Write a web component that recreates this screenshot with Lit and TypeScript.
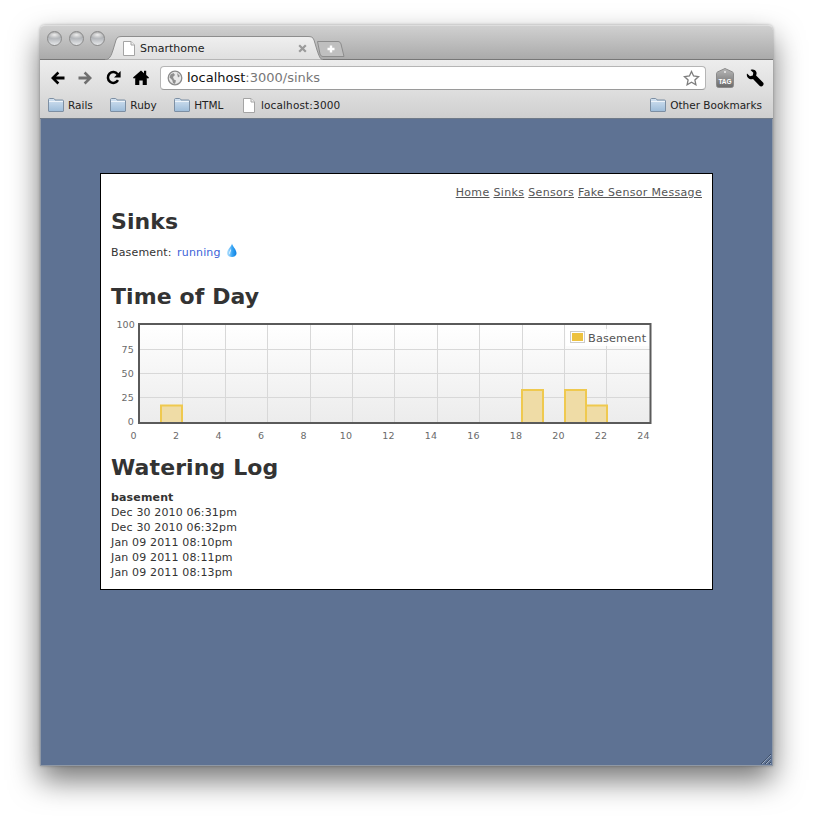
import { LitElement, html, css, svg } from 'lit';
import { customElement } from 'lit/decorators.js';

// chart geometry, taken from the plot area (svg user space = page coords)
const gridX = (h: number) => Math.round(139.9 + h * 21.2) + 0.5;
const labelX = (h: number) => 133.5 + h * 21.25;

const HOURS = [0, 2, 4, 6, 8, 10, 12, 14, 16, 18, 20, 22, 24];
const GRID_Y = [349.5, 373.5, 397.5];
const LEVELS = [
  { v: 0, x: 134, y: 424.5 },
  { v: 25, x: 134, y: 401 },
  { v: 50, x: 134, y: 377 },
  { v: 75, x: 134, y: 352.5 },
  { v: 100, x: 135, y: 328 },
];
const BARS = [
  { x: 161, w: 21, top: 405.5 },
  { x: 522, w: 21, top: 390 },
  { x: 565, w: 21, top: 390 },
  { x: 586, w: 21, top: 405.5 },
];
const LOG = [
  'Dec 30 2010 06:31pm',
  'Dec 30 2010 06:32pm',
  'Jan 09 2011 08:10pm',
  'Jan 09 2011 08:11pm',
  'Jan 09 2011 08:13pm',
];

const folder = html`<svg class="bm-icon" width="16" height="14" viewBox="0 0 16 14">
  <defs>
    <linearGradient id="fld" x1="0" y1="0" x2="0" y2="1">
      <stop offset="0" stop-color="#d3e2f1" />
      <stop offset="1" stop-color="#9dbcd9" />
    </linearGradient>
  </defs>
  <path d="M.5 13V1.6C.5 1 .9.5 1.5.5h4c.5 0 .8.2 1 .6l.5.9h7.5c.6 0 1 .4 1 1V13c0 .3-.2.5-.5.5H1c-.3 0-.5-.2-.5-.5Z" fill="url(#fld)" stroke="#7d8fa3" />
  <path d="M1 3.5h14" stroke="#eef4fa" />
</svg>`;

const page = (cls: string) => html`<svg class=${cls} width="12" height="15" viewBox="0 0 12 15">
  <path d="M.5.5h7.5l3.5 3.5v10.5H.5Z" fill="#fff" stroke="#a4a4a4" />
  <path d="M8 .5V4h3.5" fill="#eee" stroke="#a4a4a4" />
</svg>`;

@customElement('browser-chart')
class BrowserChart extends LitElement {
  static styles = css`
    :host {
      display: block;
      height: 135px;
      margin-left: -11px;
    }
    svg {
      display: block;
    }
    text {
      font-family: 'DejaVu Sans', Verdana, sans-serif;
      font-size: 9.5px;
      fill: #6a6a6a;
    }
    .legend {
      font-size: 11.3px;
      fill: #555;
    }
  `;

  render() {
    return html`<svg width="613" height="123" viewBox="100 320 613 123">
      <defs>
        <linearGradient id="plot" x1="0" y1="0" x2="0" y2="1">
          <stop offset="0" stop-color="#ffffff" />
          <stop offset="1" stop-color="#ececec" />
        </linearGradient>
      </defs>
      <rect x="139" y="324" width="511" height="99" fill="url(#plot)" />
      ${HOURS.slice(1, -1).map(
        (h) => svg`<line x1=${gridX(h)} x2=${gridX(h)} y1="324" y2="423" stroke="#d8d8d8" />`
      )}
      ${GRID_Y.map((y) => svg`<line x1="139" x2="650" y1=${y} y2=${y} stroke="#d8d8d8" />`)}
      ${BARS.map(
        (b) => svg`<path d="M${b.x} 423V${b.top}H${b.x + b.w}V423" fill="#efdca6" stroke="#efc94f" stroke-width="2" />`
      )}
      <rect x="139" y="324" width="511.500" height="99" fill="none" stroke="#5a5a5a" stroke-width="2" />
      ${HOURS.map((h) => svg`<text x=${labelX(h)} y="439" text-anchor="middle">${h}</text>`)}
      ${LEVELS.map((l) => svg`<text x=${l.x} y=${l.y} text-anchor="end">${l.v}</text>`)}
      <rect x="566" y="329" width="83" height="17" fill="#fff" opacity="0.85" />
      <rect x="570.5" y="331.5" width="14" height="11" fill="#fff" stroke="#ccc" />
      <rect x="572" y="333" width="11" height="8" fill="#edc240" />
      <text class="legend" x="588" y="342">Basement</text>
    </svg>`;
  }
}

@customElement('app-root')
export class AppRoot extends LitElement {
  static styles = css`
    :host {
      display: block;
      width: 813px;
      height: 820px;
      padding: 25px 40px 54px;
      box-sizing: border-box;
      background: #fff;
      overflow: hidden;
      font-family: 'DejaVu Sans', Verdana, sans-serif;
    }
    .window {
      position: relative;
      display: flex;
      flex-direction: column;
      height: 741px;
      border-radius: 5px 5px 0 0;
      box-shadow: 0 14px 30px rgba(0, 0, 0, 0.55), 0 0 3px rgba(0, 0, 0, 0.3);
    }

    /* title bar */
    .titlebar {
      display: flex;
      align-items: flex-start;
      height: 35px;
      flex: none;
      box-sizing: border-box;
      border-radius: 5px 5px 0 0;
      border-top: 1px solid #dedede;
      background: linear-gradient(#d0d0d0, #a9a9a9);
      box-shadow: inset 0 -1px 0 #777;
    }
    .lights {
      display: flex;
      gap: 6.5px;
      padding: 5px 0 0 7px;
      width: 65px;
      box-sizing: border-box;
    }
    .light {
      width: 15px;
      height: 15px;
      border-radius: 50%;
      box-sizing: border-box;
      border: 1px solid #8a8a8a;
      background: radial-gradient(ellipse 60% 30% at 50% 22%, #f0f0f0 0, rgba(240, 240, 240, 0) 100%),
        linear-gradient(#8f8f8f, #b5b8bc 50%, #e6e8ea);
    }
    .tab {
      position: relative;
      width: 218px;
      height: 24px;
      margin-top: 10px;
      flex: none;
    }
    .tab > svg.shape {
      position: absolute;
      left: 0;
      top: 0;
    }
    .tab-body {
      position: relative;
      display: flex;
      align-items: center;
      height: 24px;
      padding: 0 0 0 18px;
      font-size: 11px;
      color: #222;
    }
    .tab-title {
      margin-left: 5px;
      flex: 1;
    }
    .tab-close {
      margin-right: 16px;
    }
    .newtab {
      margin: 15px 0 0 -6px;
    }

    /* toolbar */
    .toolbar {
      display: flex;
      align-items: center;
      height: 35px;
      flex: none;
      box-sizing: border-box;
      background: linear-gradient(#ededed, #dcdcdc);
      padding-left: 3px;
    }
    .tool {
      width: 28px;
      display: flex;
      justify-content: center;
      flex: none;
    }
    .omnibox {
      display: flex;
      align-items: center;
      width: 546px;
      height: 24px;
      margin-left: 5px;
      box-sizing: border-box;
      flex: none;
      background: #fff;
      border: 1px solid #b5b5b5;
      border-bottom-color: #9a9a9a;
      border-radius: 4px;
      padding: 0 5px 0 6px;
      font-size: 13px;
    }
    .url {
      margin-left: 4px;
      flex: 1;
      color: #777;
    }
    .url b {
      font-weight: normal;
      color: #111;
    }
    .right-tools {
      display: flex;
      align-items: center;
      margin-left: 10px;
      gap: 10px;
    }

    /* bookmarks */
    .bookmarks {
      display: flex;
      align-items: center;
      height: 24px;
      flex: none;
      box-sizing: border-box;
      padding: 0 11px 3px 8px;
      font-size: 10.5px;
      color: #222;
      background: linear-gradient(#dcdcdc, #cfcfcf);
      border-bottom: 1px solid #6f7a88;
    }
    .bm {
      display: flex;
      align-items: center;
      gap: 4px;
      margin-right: 17.5px;
    }
    .bm.page-bm {
      gap: 6px;
      margin-left: 2px;
      letter-spacing: 0.15px;
    }
    .bm-spacer {
      flex: 1;
    }
    .bm.other {
      margin-right: 0;
    }

    /* page */
    .content {
      flex: 1;
      background: #5e7293;
      padding: 54px 60px 0;
      box-sizing: border-box;
      border: 1px solid #8f98a5;
      border-width: 0 1px 1px;
    }
    .card {
      box-sizing: border-box;
      width: 613px;
      height: 417px;
      margin-left: -1px;
      background: #fff;
      border: 1px solid #000;
      padding: 11px 10px 0;
      font-size: 11px;
      line-height: 15px;
      letter-spacing: 0.15px;
      color: #333;
    }
    nav {
      display: flex;
      justify-content: flex-end;
      gap: 4px;
      letter-spacing: 0.33px;
    }
    nav a {
      color: #555;
      text-decoration: underline;
    }
    h1 {
      font-size: 22px;
      line-height: 26px;
      font-weight: bold;
      letter-spacing: 0.1px;
      margin: 0;
      color: #333;
    }
    .sinks {
      margin-top: 9px;
    }
    .status {
      display: flex;
      align-items: center;
      margin: 10px 0 24px;
      height: 15px;
    }
    .status a {
      color: #3a62d8;
      margin-left: 5.5px;
    }
    .status svg {
      margin: -4px 0 0 5px;
    }
    .chart-wrap {
      margin-top: 10px;
    }
    .log {
      margin-top: 9px;
    }
    .log strong {
      display: block;
    }
    .grip {
      position: absolute;
      right: 1px;
      bottom: 1px;
    }
  `;

  render() {
    return html`
      <div class="window">
        <div class="titlebar">
          <div class="lights">
            <span class="light"></span><span class="light"></span><span class="light"></span>
          </div>
          <div class="tab">
            <svg class="shape" width="218" height="24" viewBox="0 0 218 24">
              <defs>
                <linearGradient id="tabfill" x1="0" y1="0" x2="0" y2="1">
                  <stop offset="0" stop-color="#efefef" />
                  <stop offset="1" stop-color="#dfdfdf" />
                </linearGradient>
              </defs>
              <path d="M0 24C5 23 6 20 8 14L11 4C12 1 14 .5 17 .5H203C206 .5 208 1 209 4L212 14C214 20 215 23 218 24Z" fill="url(#tabfill)" stroke="#8d8d8d" />
              <path d="M0 24.5H218" stroke="#e6e6e6" />
            </svg>
            <div class="tab-body">
              ${page('tab-icon')}
              <span class="tab-title">Smarthome</span>
              <svg class="tab-close" width="9" height="9" viewBox="0 0 9 9">
                <path d="M1.2 1.2l6.6 6.6M7.8 1.2L1.2 7.8" stroke="#9a9a9a" stroke-width="2.2" />
              </svg>
            </div>
          </div>
          <svg class="newtab" width="28" height="16" viewBox="0 0 28 16">
            <path d="M.5.5H21C22.5.5 23.5 1.5 24 3L27 15.5H6C4.5 15.5 3.5 14.5 3 13Z" fill="#bfbfbf" stroke="#8c8c8c" />
            <path d="M14 4.5v7M10.5 8h7" stroke="#fff" stroke-width="2.4" />
          </svg>
        </div>

        <div class="toolbar">
          <span class="tool">
            <svg width="15" height="14" viewBox="0 0 15 14"><path d="M7.5 0.6 1 7l6.5 6.4 1.8-1.8-3.2-3.1H14.5v-3H6.1l3.2-3.1Z" fill="#000" /></svg>
          </span>
          <span class="tool">
            <svg width="15" height="14" viewBox="0 0 15 14"><path d="M7.5 0.6 14 7l-6.5 6.4-1.8-1.8 3.2-3.1H.5v-3h8.4L5.7 2.4Z" fill="#6f6f6f" /></svg>
          </span>
          <span class="tool">
            <svg width="15" height="15" viewBox="0 0 15 15">
              <path d="M12 10.2A5.4 5.4 0 1 1 11.6 4.2" fill="none" stroke="#000" stroke-width="2.5" />
              <path d="M14.6.9V7.5H8Z" fill="#000" />
            </svg>
          </span>
          <span class="tool">
            <svg width="16" height="15" viewBox="0 0 16 15">
              <path d="M8 .6 11 3.2V.8h2.2v4.3L16 7.6l-1 1.2-1.2-1V15H9.7v-4.4H6.3V15H2.2V7.8L1 8.8 0 7.6Z" fill="#000" />
            </svg>
          </span>
          <div class="omnibox">
            <svg width="16" height="16" viewBox="0 0 16 16">
              <circle cx="8" cy="8" r="6.8" fill="#e9e9e9" stroke="#8b8b8b" stroke-width="1.3" />
              <path d="M3.5 4.5 6.5 3 8 5 6 7l1 2.500 2 1-1 3.500-2-1-.8-3-2.700-2.500ZM10 3l3 3-2 1.500Z" fill="#8f8f8f" />
            </svg>
            <span class="url"><b>localhost</b>:3000/sinks</span>
            <svg width="17" height="16" viewBox="0 0 17 16">
              <path d="M8.500 1.500 10.600 6l4.900.6-3.600 3.300 1 4.900-4.400-2.500-4.400 2.500 1-4.900L1.500 6.600 6.400 6Z" fill="#fff" stroke="#7d7d7d" stroke-width="1.300" />
            </svg>
          </div>
          <div class="right-tools">
            <svg width="18" height="20" viewBox="0 0 18 20">
              <defs>
                <linearGradient id="tagfill" x1="0" y1="0" x2="0" y2="1">
                  <stop offset="0" stop-color="#b9b9b9" />
                  <stop offset="1" stop-color="#6a6a6a" />
                </linearGradient>
              </defs>
              <path d="M.5 5.500C.5 4.800 1 4.200 1.600 3.900L9 .5l7.400 3.400c.6.300 1.100.9 1.100 1.600V17.500c0 1.100-.9 2-2 2H2.500c-1.100 0-2-.9-2-2Z" fill="url(#tagfill)" stroke="#8a8a8a" />
              <circle cx="9" cy="4" r="1" fill="#eee" />
              <text x="9" y="15.500" text-anchor="middle" font-size="6.500" font-weight="bold" fill="#fff" font-family="'Liberation Sans', sans-serif">TAG</text>
            </svg>
            <svg width="18" height="18" viewBox="0 0 18 18" style="margin-left:2px">
              <path d="M1 4.500 4 7.200 6.800 6.500 7.300 3.800 4.500 1C7 -.2 10 1 10.500 3.500 10.700 4.600 10.500 5.600 10.100 6.400L16.800 13.200C17.900 14 17.800 15.500 17 16.500 16 17.600 14.500 17.700 13.500 16.700L7 9.900C5.500 10.500 3.500 10.300 2.200 9 .9 7.700.5 6 1 4.500Z" fill="#000" />
            </svg>
          </div>
        </div>

        <div class="bookmarks">
          <span class="bm">${folder}Rails</span>
          <span class="bm">${folder}Ruby</span>
          <span class="bm">${folder}HTML</span>
          <span class="bm page-bm">${page('bm-icon')}localhost:3000</span>
          <span class="bm-spacer"></span>
          <span class="bm other">${folder}Other Bookmarks</span>
        </div>

        <div class="content">
          <div class="card">
            <nav>
              <a>Home</a><a>Sinks</a><a>Sensors</a><a>Fake Sensor Message</a>
            </nav>
            <h1 class="sinks">Sinks</h1>
            <div class="status">
              Basement: <a>running</a>
              <svg width="11" height="15" viewBox="0 0 11 15">
                <defs>
                  <linearGradient id="drop" x1="0" y1="0" x2="1" y2="0">
                    <stop offset="0" stop-color="#bfe6ff" />
                    <stop offset="0.55" stop-color="#37a5f5" />
                    <stop offset="1" stop-color="#0e7fe0" />
                  </linearGradient>
                </defs>
                <path d="M6 .5C6.300 3 10.500 6.500 10.500 10 10.500 12.700 8.500 14 6 14 3 14 1 12.500 1 10 1 6.500 5.500 3.500 6 .5Z" fill="url(#drop)" />
                <path d="M3 10.500C3 8.500 4.500 7 5 5.500 5.500 8 4 9 4 11.500Z" fill="#dff2ff" />
              </svg>
            </div>
            <h1>Time of Day</h1>
            <div class="chart-wrap"><browser-chart></browser-chart></div>
            <h1>Watering Log</h1>
            <div class="log">
              <strong>basement</strong>
              ${LOG.map((l) => html`<div>${l}</div>`)}
            </div>
          </div>
        </div>

        <svg class="grip" width="12" height="12" viewBox="0 0 12 12">
          <path d="M1 11 11 1M5 11l6-6M9 11l2-2" stroke="#2b3a50" stroke-width="1" stroke-dasharray="1 .6" />
          <path d="M2 11 11 2M6 11l5-5M10 11l1-1" stroke="#b9c4d4" stroke-width="1" stroke-dasharray="1 .6" />
        </svg>
      </div>
    `;
  }
}
